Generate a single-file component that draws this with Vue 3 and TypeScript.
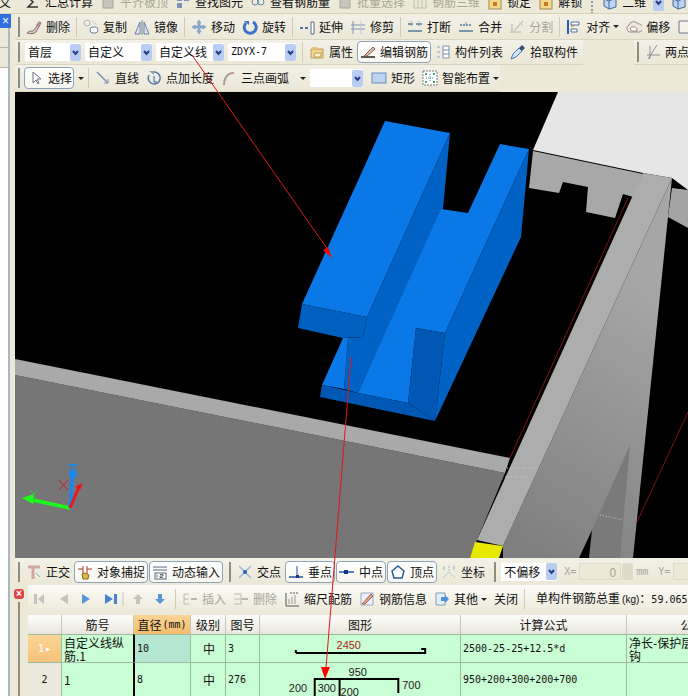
<script setup lang="ts">
interface Tool {
  label?: string;
  icon?: string;
  dim?: boolean;
  caret?: boolean;
  boxed?: boolean;
  sep?: boolean;
  grip?: boolean;
}

const icons: Record<string, string> = {
  pencil:
    '<path d="M1 14c3-3 5-1 7-3l6-8 1 1-5 9c-2 2-6 2-9 1z" fill="#d9c9c0" stroke="#8a6a70"/><path d="M10 6l3-4 2 2-3 4z" fill="#b08a98"/>',
  copy: '<circle cx="4" cy="4" r="3" fill="none" stroke="#a9b2bd"/><rect x="7" y="8" width="8" height="6" rx="3" fill="#fff" stroke="#6f7f92"/><path d="M9 2l5 4" stroke="#a9b2bd" stroke-dasharray="1 1"/>',
  mirror:
    '<path d="M1 15L6 3v12zM15 15L10 3v12z" fill="#dce6f3" stroke="#66809f"/><path d="M8 1v15" stroke="#66809f"/>',
  move: '<path d="M8 1l2 3H9v3h3V6l3 2-3 2V9H9v3h1l-2 3-2-3h1V9H4v1L1 8l3-2v1h3V4H6z" fill="#8ab0d8" stroke="#5f86b0" stroke-width=".5"/>',
  rotate:
    '<path d="M11 3a6 6 0 1 1-7 1" fill="none" stroke="#3f72c8" stroke-width="3"/><path d="M2 2h5v4z" fill="#3f72c8"/>',
  extend:
    '<path d="M1 9h3M6 9h3" stroke="#5070a8" stroke-width="2"/><path d="M12 3h3v12h-3z" fill="#fff" stroke="#5a6a80"/>',
  trim: '<path d="M3 2v13M1 6h14M1 10h14" stroke="#7c93b5"/><path d="M11 2v13" stroke="#b8c6d8"/>',
  breakline:
    '<path d="M1 5h5M9 5h6M1 12h14" stroke="#79a" stroke-width="2"/><path d="M4 2v6M12 2v6" stroke="#79a" stroke-dasharray="1 1"/>',
  merge:
    '<path d="M1 12h14" stroke="#79a" stroke-width="2"/><path d="M2 6h12" stroke="#79a" stroke-dasharray="2 1" stroke-width="2"/><path d="M8 3v3" stroke="#79a"/>',
  split:
    '<path d="M1 13h11M3 5v9M14 2L5 12" stroke="#c8c6b8" stroke-width="1.5"/><path d="M10 3l4 4" stroke="#c8c6b8"/>',
  align:
    '<path d="M2 1v14" stroke="#2a5db0" stroke-width="2"/><path d="M5 3h8v3H5zM5 10h6v3H5z" fill="#fff" stroke="#5070a0"/><path d="M5 7h3" stroke="#c07030"/>',
  offset:
    '<path d="M3 13a4 4 0 0 1 0-7 5 5 0 0 1 9-1 4 4 0 0 1 1 8z" fill="#f3e7e0" stroke="#9a8a8a"/><path d="M6 12a2 2 0 0 1 1-4 3 3 0 0 1 4 2v2z" fill="#fff" stroke="#9a8a8a"/>',
  square: '<path d="M2 2h12v12H2z" fill="#f5f3e8" stroke="#6a7a90"/>',
  prop: '<path d="M2 5h12v9H2z" fill="#f3d58e" stroke="#b89a60"/><path d="M3 3h5l1 2H3z" fill="#e9c26b"/><path d="M6 9h7l-2 4H5z" fill="#fff3cc" stroke="#c09a50"/>',
  rebar:
    '<path d="M1 13h14" stroke="#222" stroke-width="1.5"/><path d="M4 12L13 3l2 2-8 7z" fill="#d8c0b0" stroke="#86604a"/>',
  list: '<path d="M2 2h3v2H2zM2 7h3v2H2zM2 12h3v2H2z" fill="#bcc6d6"/><path d="M8 2h6v12H8z" fill="#fff" stroke="#7a8fa8"/><path d="M8 6h6M8 10h6" stroke="#7a8fa8"/>',
  picker:
    '<path d="M1 15l2-5 6-6 3 3-6 6z" fill="#cfe6f8" stroke="#4a78a8"/><path d="M9 4l3-3 3 3-3 3z" fill="#34506e"/>',
  cross: '<path d="M2 11h13M5 2v13M12 1L3 15" stroke="#8a8f96"/>',
  cursor: '<path d="M5 2v11l3-3 2 4 1-1-2-4h4z" fill="#fff" stroke="#6d7480"/>',
  line: '<path d="M2 2l11 11" stroke="#7d93ad" stroke-width="1.5"/><path d="M13 13v-4M13 13H9" stroke="#7d93ad"/>',
  addlen:
    '<path d="M8 2a6 6 0 1 1-5 3" fill="none" stroke="#5a78a8" stroke-width="1.5"/><path d="M3 1h5v4z" fill="#8aa"/><path d="M8 6v6M8 12h3" stroke="#36a"/>',
  arc: '<path d="M3 15C3 8 6 4 11 3" fill="none" stroke="#a2a09a" stroke-width="2"/><circle cx="12" cy="3" r="1" fill="#c87a60"/>',
  rect: '<rect x="1" y="3" width="14" height="10" fill="#bcd4f2" stroke="#6d8cb8"/>',
  smart:
    '<path d="M1 1h14v14H1z" fill="#fff" stroke="#777" stroke-dasharray="2 1"/><path d="M8 4v8M4 8h8" stroke="#48a" stroke-dasharray="1 1"/><path d="M3 3h2v2H3zM11 3h2v2h-2zM3 11h2v2H3zM11 11h2v2h-2z" fill="#4a7"/>',
  ortho:
    '<path d="M2 3h12M7 3v12" stroke="#d3a8a4" stroke-width="3"/><path d="M10 9l4 4" stroke="#8aa"/>',
  snap: '<path d="M1 5h5M6 2v8M10 2v8M10 5h5" stroke="#a63a20"/><path d="M5 10l3-1 4 2-1 4H6z" fill="#d9b84a" stroke="#8a7020"/>',
  dyn: '<path d="M1 3h14M1 6h14" stroke="#5a6a80"/><rect x="3" y="9" width="11" height="6" fill="#fff" stroke="#5a6a80"/><path d="M5 10.5v3M8 10.5h3v1.5H8v1.5h3" fill="none" stroke="#333" stroke-width=".7"/>',
  intersect:
    '<path d="M2 2l12 12M14 2L2 14" stroke="#9db8d8" stroke-width="1.5"/><circle cx="8" cy="8" r="2" fill="#2d5fa8"/>',
  perp: '<path d="M1 13h14" stroke="#2056a8" stroke-width="1.5"/><path d="M9 2v11" stroke="#2056a8"/><rect x="8" y="11" width="3" height="3" fill="#123a78"/>',
  mid: '<path d="M0 8h15" stroke="#2056a8" stroke-width="1.5"/><rect x="5" y="6" width="4" height="4" fill="#123a78"/>',
  vertex: '<path d="M8 2l6 5-2 7H4L2 7z" fill="#fff" stroke="#2a5a9a" stroke-width="1.5"/>',
  coord:
    '<path d="M2 14L8 8l6 6M8 2v6" fill="none" stroke="#a8b8cc" stroke-dasharray="2 1"/><path d="M3 2v4M13 2v4" stroke="#8ba"/>',
  insert:
    '<path d="M2 3h5M2 8h5M2 13h5M2 3v10" stroke="#b8b8ae"/><path d="M9 8h6" stroke="#b8b8ae" stroke-width="2"/>',
  remove:
    '<path d="M1 3h7M1 8h7M1 13h7M8 3v10" stroke="#b8b8ae"/><path d="M9 8h6" stroke="#b8b8ae" stroke-width="2"/>',
  scale:
    '<path d="M2 2v13h13" stroke="#555" fill="none"/><path d="M5 13V8M8 13V6M11 13V4" stroke="#999"/><path d="M6 2h8" stroke="#555" stroke-dasharray="2 1"/>',
  info: '<path d="M2 2h12v12H2z" fill="#eef" stroke="#9ab"/><path d="M3 13L12 3l2 2-8 8z" fill="#e0a088" stroke="#a86a50"/>',
  other:
    '<path d="M2 2h9v12H2z" fill="#e4eef8" stroke="#7f9cc0"/><path d="M7 6h4V4l4 4-4 4v-2H7z" fill="#4f8ed8"/>',
  sum: '<path d="M13 3H3l5 5-5 5h10" fill="none" stroke="#333" stroke-width="1.5"/>',
  grayDoc: '<path d="M3 2h10v12H3z" fill="#c8c6bc" stroke="#a8a69c"/>',
  find: '<path d="M2 2h5v5H2zM9 2h5v5H9zM2 9h5v5H2z" fill="#7a95b8"/>',
  view: '<circle cx="5" cy="8" r="3" fill="none" stroke="#68a"/><circle cx="11" cy="8" r="3" fill="none" stroke="#68a"/>',
  rebar3d: '<path d="M2 2h12v12H2zM6 2v12M10 2v12" fill="none" stroke="#c0beb2"/>',
  lock: '<rect x="2" y="5" width="12" height="10" fill="#f2d98e" stroke="#a48a4a"/><rect x="6" y="8" width="4" height="4" fill="#c57a20"/>',
  cube: '<path d="M2 5l7-3 5 2v9l-7 2-5-3z" fill="#bcd4f2" stroke="#43699c"/><path d="M2 5l5 2v8M7 7l7-3" fill="none" stroke="#43699c"/>',
};

const topBar: Tool[] = [
  { icon: "sum", label: "汇总计算" },
  { icon: "grayDoc", label: "平齐板顶", dim: true },
  { icon: "find", label: "查找图元" },
  { icon: "view", label: "查看钢筋量" },
  { icon: "grayDoc", label: "批量选择", dim: true },
  { icon: "rebar3d", label: "钢筋三维", dim: true },
  { icon: "lock", label: "锁定" },
  { icon: "lock", label: "解锁" },
  { grip: true },
  { icon: "cube", label: "二维" },
];

const row1: Tool[] = [
  { icon: "pencil", label: "删除" },
  { sep: true },
  { icon: "copy", label: "复制" },
  { icon: "mirror", label: "镜像" },
  { sep: true },
  { icon: "move", label: "移动" },
  { icon: "rotate", label: "旋转" },
  { sep: true },
  { icon: "extend", label: "延伸" },
  { icon: "trim", label: "修剪" },
  { sep: true },
  { icon: "breakline", label: "打断" },
  { icon: "merge", label: "合并" },
  { icon: "split", label: "分割", dim: true },
  { sep: true },
  { icon: "align", label: "对齐", caret: true },
  { icon: "offset", label: "偏移" },
  { icon: "square", label: "" },
];

const row2Combos = [
  { text: "首层", width: 56 },
  { text: "自定义", width: 67 },
  { text: "自定义线", width: 68 },
  { text: "ZDYX-7", width: 68, mono: true },
];

const row2: Tool[] = [
  { icon: "prop", label: "属性" },
  { icon: "rebar", label: "编辑钢筋", boxed: true },
  { icon: "list", label: "构件列表" },
  { icon: "picker", label: "拾取构件" },
];

const row3a: Tool[] = [
  { icon: "line", label: "直线" },
  { icon: "addlen", label: "点加长度" },
  { icon: "arc", label: "三点画弧", caret: true },
];

const row3b: Tool[] = [
  { icon: "rect", label: "矩形" },
  { icon: "smart", label: "智能布置", caret: true },
];

const snapA: Tool[] = [
  { icon: "ortho", label: "正交" },
  { icon: "snap", label: "对象捕捉", boxed: true },
  { icon: "dyn", label: "动态输入", boxed: true },
  { grip: true },
  { icon: "intersect", label: "交点" },
  { icon: "perp", label: "垂点", boxed: true },
  { icon: "mid", label: "中点", boxed: true },
  { icon: "vertex", label: "顶点", boxed: true },
  { icon: "coord", label: "坐标" },
  { grip: true },
];

const rows = [
  {
    no: "1",
    name: ["自定义线纵", "筋.1"],
    dia: "10",
    fig: "3",
    formula: "2500-25-25+12.5*d",
    desc: ["净长-保护层+弯", "钩"],
    active: true,
  },
  {
    no: "2",
    name: ["1"],
    dia: "8",
    fig: "276",
    formula: "950+200+300+200+700",
    desc: [],
    active: false,
  },
];
</script>

<template>
  <div class="app">
    <div class="menu">
      <span class="menu-cut">定义</span>
      <div v-for="(t, i) in topBar" :key="i" class="menu-item" :class="{ dim: t.dim, grip: t.grip }">
        <svg v-if="t.icon" class="ico" viewBox="0 0 16 16" v-html="icons[t.icon]"></svg>
        <span v-if="t.label">{{ t.label }}</span>
      </div>
      <svg class="combo-btn menu-btn" viewBox="0 0 11 17">
        <rect width="11" height="17" rx="2" fill="#b9cdf2" />
        <path d="M3 7l2.5 3L8 7" fill="none" stroke="#24408c" stroke-width="2" />
      </svg>
      <svg class="ico menu-btn" viewBox="0 0 16 16" v-html="icons.cube"></svg>
    </div>

    <div class="body">
      <div class="rail">
        <div class="rail-x">×</div>
        <div class="rail-tab"></div>
        <div class="rail-tab"></div>
        <div class="rail-fill"></div>
      </div>

      <div class="main">
        <div class="row row1">
          <div class="bar">
            <i class="gripper"></i>
            <template v-for="(t, i) in row1" :key="i">
              <i v-if="t.sep" class="sep"></i>
              <div v-else class="tool" :class="{ dim: t.dim }">
                <svg class="ico" viewBox="0 0 16 16" v-html="icons[t.icon!]"></svg>
                <span v-if="t.label">{{ t.label }}</span>
                <b v-if="t.caret" class="caret"></b>
              </div>
            </template>
          </div>
        </div>

        <div class="row row2">
          <div class="bar bar-combos">
            <i class="gripper grip-wide"></i>
            <div
              v-for="c in row2Combos"
              :key="c.text"
              class="combo"
              :style="{ width: c.width + 'px' }"
            >
              <span :class="{ mono: c.mono }">{{ c.text }}</span>
              <svg class="combo-btn" viewBox="0 0 11 17">
                <rect width="11" height="17" rx="2" fill="#b9cdf2" />
                <path d="M3 7l2.5 3L8 7" fill="none" stroke="#24408c" stroke-width="2" />
              </svg>
            </div>
            <i class="sep sep-wide"></i>
            <div v-for="t in row2" :key="t.label" class="tool" :class="{ boxed: t.boxed }">
              <svg class="ico" viewBox="0 0 16 16" v-html="icons[t.icon!]"></svg>
              <span>{{ t.label }}</span>
            </div>
          </div>
          <div class="bar bar-right">
            <i class="gripper"></i>
            <div class="tool">
              <svg class="ico" viewBox="0 0 16 16" v-html="icons.cross"></svg>
              <span>两点</span>
            </div>
          </div>
        </div>

        <div class="row row3">
          <div class="bar bar-draw">
            <i class="gripper grip-mid"></i>
            <div class="tool boxed select-btn">
              <svg class="ico" viewBox="0 0 16 16" v-html="icons.cursor"></svg>
              <span>选择</span>
            </div>
            <b class="caret caret-select"></b>
            <i class="sep"></i>
            <div v-for="t in row3a" :key="t.label" class="tool">
              <svg class="ico" viewBox="0 0 16 16" v-html="icons[t.icon!]"></svg>
              <span>{{ t.label }}</span>
              <b v-if="t.caret" class="caret caret-far"></b>
            </div>
            <div class="combo combo-blank">
              <span></span>
              <svg class="combo-btn" viewBox="0 0 11 17">
                <rect width="11" height="17" rx="2" fill="#b9cdf2" />
                <path d="M3 7l2.5 3L8 7" fill="none" stroke="#24408c" stroke-width="2" />
              </svg>
            </div>
            <div v-for="t in row3b" :key="t.label" class="tool">
              <svg class="ico" viewBox="0 0 16 16" v-html="icons[t.icon!]"></svg>
              <span>{{ t.label }}</span>
              <b v-if="t.caret" class="caret"></b>
            </div>
          </div>
        </div>

        <svg class="scene" viewBox="15 92 673 466" width="673" height="466">
          <defs>
            <linearGradient id="wall" gradientUnits="userSpaceOnUse" x1="520" y1="540" x2="670" y2="300">
              <stop offset="0" stop-color="#808080" />
              <stop offset="1" stop-color="#a6a6a6" />
            </linearGradient>
          </defs>
          <rect x="15" y="92" width="673" height="466" fill="#000" />
          <!-- floor and back walls -->
          <path d="M15 375L505 473 477 540 470 558H15z" fill="#767676" />
          <path d="M15 359L510 458 505 473 15 375z" fill="#a9a9a9" />
          <path d="M558 92H688V190L672 178 643 173 533 150z" fill="#e6e6e6" />
          <path d="M533 151L643 174 633 197 623 194 615 218 586 212 588 187 563 182 559 193 529 188z" fill="#a8a8a8" />
          <path d="M672 188L688 190V228L668 217z" fill="#a4a4a4" />
          <path d="M672 178L633 558H503V546z" fill="url(#wall)" />
          <path d="M630 445L592 530 589 558H620z" fill="#7a7a7a" />
          <path d="M592 530L579 558H589z" fill="#000" />
          <path d="M643 173L672 178 503 546 477 540z" fill="#adadad" />
          <path d="M475 542L503 546 499 558H470z" fill="#e8e800" />
          <path d="M510 458L628 198" stroke="#7a1414" fill="none" />
          <path d="M637 522L688 412" stroke="#7a1414" fill="none" />
          <path d="M507 468H537M505 477H528M600 515L623 520" stroke="#ccc" stroke-dasharray="1 2" fill="none" />
          <!-- blue member -->
          <path d="M385 121L450 133 367 317 302 304z" fill="#0a78e6" />
          <path d="M450 133L443 209 358 393 344 389 348 338 363 337 367 317z" fill="#0062c4" />
          <path d="M302 304L367 317 363 337 343 338 298 328z" fill="#0060c0" />
          <path d="M343 338L348 338 344 389 322 385z" fill="#0a78e6" />
          <path d="M441 209L468 213 500 144 529 149 445 333 416 328 408 403 358 393z" fill="#0a78e6" />
          <path d="M529 149L521 237 435 421 445 333z" fill="#0062c4" />
          <path d="M416 328L445 333 435 421 408 403z" fill="#0058b4" />
          <path d="M322 385L358 393 408 403 435 421 320 397z" fill="#0058b4" />
          <!-- axis marker -->
          <path d="M70 508L28 499" stroke="#19ff19" stroke-width="3.5" />
          <path d="M22 498L34 494 33 504z" fill="#19ff19" />
          <path d="M70 508L73 468" stroke="#1a86f0" stroke-width="3.5" />
          <circle cx="73" cy="474" r="4" fill="#1a86f0" />
          <path d="M69 465H77" stroke="#1a86f0" stroke-width="2" />
          <path d="M70 508L79 487" stroke="#f01414" stroke-width="3" />
          <path d="M82 483L75 487 81 489z" fill="#f01414" />
          <path d="M59 480L68 490M68 480L59 490" stroke="#c02030" fill="none" />
          <path d="M30 490L34 494 38 490M34 494V500" stroke="#39c739" fill="none" />
        </svg>

        <div class="row snapbar">
          <i class="gripper"></i>
          <template v-for="(t, i) in snapA" :key="i">
            <i v-if="t.grip" class="gripper gripper-mid"></i>
            <div v-else class="tool" :class="{ boxed: t.boxed }">
              <svg class="ico" viewBox="0 0 16 16" v-html="icons[t.icon!]"></svg>
              <span>{{ t.label }}</span>
            </div>
          </template>
          <div class="combo combo-offset">
            <span>不偏移</span>
            <svg class="combo-btn" viewBox="0 0 11 17">
              <rect width="11" height="17" rx="2" fill="#b9cdf2" />
              <path d="M3 7l2.5 3L8 7" fill="none" stroke="#24408c" stroke-width="2" />
            </svg>
          </div>
          <span class="coord-label">X=</span>
          <div class="coord-input"><span>0</span></div>
          <div class="spinner"></div>
          <span class="coord-label mm">mm</span>
          <span class="coord-label">Y=</span>
          <div class="coord-input"></div>
        </div>
      </div>
    </div>

    <div class="panel">
      <div class="panel-side">
        <b class="close-dot">×</b>
        <i class="panel-dots"></i>
      </div>
      <div class="panel-body">
        <div class="panel-tools">
          <svg class="nav" viewBox="0 0 134 14" width="134" height="14">
            <path d="M0 2h3v10H0zM10 2v10L4 7z" fill="#c4c4bc" />
            <path d="M34 2v10l-8-5z" fill="#c4c4bc" />
            <path d="M48 2v10l8-5z" fill="#5a94dc" />
            <path d="M71 2v10l8-5zM80 2h3v10h-3z" fill="#4a84d0" />
            <path d="M89 0v14" stroke="#c9c7b8" />
            <path d="M104 2l5 5h-3v5h-4V7h-3z" fill="#c4c4bc" />
            <path d="M126 12l5-5h-3V2h-4v5h-3z" fill="#5a94dc" />
          </svg>
          <i class="sep"></i>
          <div class="tool dim">
            <svg class="ico" viewBox="0 0 16 16" v-html="icons.insert"></svg>
            <span>插入</span>
          </div>
          <div class="tool dim">
            <svg class="ico" viewBox="0 0 16 16" v-html="icons.remove"></svg>
            <span>删除</span>
          </div>
          <div class="tool">
            <svg class="ico" viewBox="0 0 16 16" v-html="icons.scale"></svg>
            <span>缩尺配筋</span>
          </div>
          <div class="tool">
            <svg class="ico" viewBox="0 0 16 16" v-html="icons.info"></svg>
            <span>钢筋信息</span>
          </div>
          <div class="tool">
            <svg class="ico" viewBox="0 0 16 16" v-html="icons.other"></svg>
            <span>其他</span>
            <b class="caret"></b>
          </div>
          <div class="tool"><span>关闭</span></div>
          <i class="sep"></i>
          <span class="total">单构件钢筋总重<small>(kg)</small>：<em>59.065</em></span>
        </div>

        <div class="table">
          <div class="th"></div>
          <div class="th">筋号</div>
          <div class="th th-on">直径<small>(mm)</small></div>
          <div class="th">级别</div>
          <div class="th">图号</div>
          <div class="th">图形</div>
          <div class="th">计算公式</div>
          <div class="th">公式描述</div>

          <template v-for="r in rows" :key="r.no">
            <div class="td td-no" :class="{ 'td-no-on': r.active }">
              {{ r.no }}<span v-if="r.active" class="mark">▸</span>
            </div>
            <div class="td td-name">
              <div v-for="n in r.name" :key="n">{{ n }}</div>
            </div>
            <div class="td td-dia" :class="{ 'td-dia-on': r.active }">{{ r.dia }}</div>
            <div class="td td-grade">中</div>
            <div class="td td-num">{{ r.fig }}</div>
            <div class="td td-shape">
              <svg v-if="r.active" viewBox="0 0 201 28" width="201" height="28">
                <text x="77" y="14" class="dim-red">2450</text>
                <path d="M36 18v-3M36 18H166V14H162" fill="none" stroke="#000" stroke-width="2" />
              </svg>
              <svg v-else viewBox="0 0 201 34" width="201" height="34">
                <text x="89" y="13" class="dim-black">950</text>
                <text x="29" y="29" class="dim-black">200</text>
                <text x="58" y="29" class="dim-black">300</text>
                <text x="81" y="33" class="dim-black">200</text>
                <text x="143" y="26" class="dim-black">700</text>
                <path d="M55 34V16H139V30" fill="none" stroke="#000" stroke-width="2" />
                <path d="M80 16V34H76M80 34V27" fill="none" stroke="#000" stroke-width="2" />
              </svg>
            </div>
            <div class="td td-num">{{ r.formula }}</div>
            <div class="td td-desc">
              <div v-for="d in r.desc" :key="d">{{ d }}</div>
            </div>
          </template>
        </div>
      </div>
    </div>

    <svg class="arrows" viewBox="0 0 688 696" width="688" height="696">
      <path d="M192 55L328 250" stroke="#e01818" fill="none" />
      <path d="M332 258L323 250 328 247z" fill="#f00" />
      <path d="M351 357L326 668" stroke="#e01818" fill="none" />
      <path d="M325 679L321 667H330z" fill="#f00" />
    </svg>
  </div>
</template>

<style>
html,
body {
  margin: 0;
  background: #ece9d8;
}
</style>

<style scoped>
.app {
  position: relative;
  width: 688px;
  height: 696px;
  overflow: hidden;
  display: flex;
  flex-direction: column;
  background: #ece9d8;
  font-family: "Noto Sans CJK SC", "Liberation Sans", sans-serif;
  font-size: 12px;
  line-height: 16px;
  color: #111;
}

.menu {
  height: 13px;
  flex: none;
  display: flex;
  gap: 7px;
  overflow: hidden;
  white-space: nowrap;
  align-items: flex-start;
  border-bottom: 1px solid #d6d2bd;
}
.menu-cut {
  margin: -5px 7px 0 -13px;
}
.menu-item {
  display: flex;
  align-items: center;
  gap: 4px;
  margin-top: -6px;
}
.menu-item.grip {
  width: 2px;
  height: 20px;
  border-left: 2px dotted #999;
  margin-left: 2px;
}
.menu-btn {
  margin-top: -6px;
  flex: none;
}

.body {
  flex: none;
  height: 571px;
  display: flex;
}
.rail {
  flex: none;
  width: 8px;
  display: flex;
  flex-direction: column;
  border-right: 2px solid #aeb6c4;
  background: #fff;
}
.rail-x {
  height: 14px;
  width: 11px;
  background: #2f6fe0;
  color: #fff;
  font: 12px/14px "Liberation Sans", sans-serif;
  text-align: center;
  position: relative;
}
.rail-tab {
  height: 19px;
  background: #ece9d8;
  border-bottom: 1px solid #b8b6a6;
}
.rail-fill {
  flex: 1;
}
.main {
  flex: none;
  width: 678px;
  padding-left: 5px;
  box-sizing: border-box;
  display: flex;
  flex-direction: column;
}

.row {
  display: flex;
  flex: none;
  justify-content: space-between;
}
.row1 {
  height: 26px;
}
.row2 {
  height: 25px;
}
.row3 {
  height: 27px;
}
.bar {
  display: flex;
  align-items: center;
  gap: 1px;
  padding: 0 5px 0 3px;
  background: linear-gradient(#f3f1e6, #ebe8d8);
  border-bottom: 1px solid #d8d4c0;
  box-sizing: border-box;
}
.row1 .bar {
  width: 100%;
}
.bar-combos {
  width: 568px;
}
.bar-right {
  width: 54px;
}
.bar-draw {
  width: 485px;
}

.gripper {
  flex: none;
  width: 2px;
  height: 20px;
  margin-right: 2px;
  background-image: radial-gradient(#8f8d80 1px, transparent 1px);
  background-size: 2px 3px;
}
.grip-wide {
  margin-right: 4px;
}
.grip-mid {
  margin-right: 3px;
}
.gripper-mid {
  margin: 0 2px 0 5px;
}
.sep {
  flex: none;
  width: 1px;
  height: 20px;
  margin: 0 2px;
  background: #cfccb8;
}
.sep-wide {
  margin: 0 2px;
}

.tool {
  flex: none;
  display: flex;
  align-items: center;
  gap: 4px;
  height: 22px;
  padding: 0 3px;
  box-sizing: border-box;
  white-space: nowrap;
}
.dim,
.dim span {
  color: #a8a698;
}
.boxed {
  padding: 0 2px;
  border: 1px solid #8ea2b8;
  border-radius: 4px;
  background: linear-gradient(#fff, #f7f6ef);
}
.ico {
  flex: none;
  width: 16px;
  height: 16px;
}
.caret {
  flex: none;
  width: 0;
  height: 0;
  margin-left: -1px;
  border: 3px solid transparent;
  border-top: 3px solid #222;
  border-bottom: 0;
}
.caret-far {
  margin-left: 7px;
}

.combo {
  flex: none;
  height: 18px;
  display: flex;
  align-items: center;
  justify-content: space-between;
  background: #fff;
  padding-left: 3px;
  margin-right: 3px;
  box-sizing: border-box;
  overflow: hidden;
}
.combo-btn {
  flex: none;
  width: 11px;
  height: 17px;
}
.mono {
  font: 10px/16px "DejaVu Sans Mono", monospace;
}
.combo-blank {
  width: 53px;
  margin: 0 4px 0 0;
}
.combo-offset {
  width: 56px;
  margin: 0 4px 0 2px;
}
.select-btn {
  width: 50px;
  padding: 0 3px;
}
.caret-select {
  margin: 0 1px 0 3px;
}

.scene {
  display: block;
  flex: none;
}

.snapbar {
  height: 27px;
  justify-content: flex-start;
  align-items: center;
  padding-left: 3px;
  gap: 1px;
  background: linear-gradient(#f3f1e6, #ebe8d8);
}
.coord-label {
  flex: none;
  font: 10px/16px "DejaVu Sans Mono", monospace;
  color: #a8a698;
  margin: 0 2px;
}
.mm {
  margin-right: 7px;
}
.coord-input {
  flex: none;
  width: 42px;
  height: 17px;
  background: #ece9d8;
  border: 1px solid #dedbc8;
  box-sizing: border-box;
  text-align: right;
  color: #a8a698;
  padding-right: 4px;
  font-size: 12px;
}
.spinner {
  flex: none;
  width: 11px;
  height: 17px;
  background: #dedbc8;
  border-radius: 2px;
}

.panel {
  flex: 1;
  display: flex;
  border-left: 8px solid #fff;
  min-height: 0;
}
.panel-side {
  flex: none;
  width: 20px;
  box-sizing: border-box;
  border-left: 2px solid #aeb6c4;
  display: flex;
  flex-direction: column;
  align-items: center;
}
.close-dot {
  width: 10px;
  height: 10px;
  margin: 4px 0 3px;
  border-radius: 3px;
  background: #d84848;
  color: #fff;
  font: bold 10px/10px "Liberation Sans", sans-serif;
  text-align: center;
}
.panel-dots {
  flex: 1;
  width: 2px;
  background-image: radial-gradient(#8f8d80 1px, transparent 1px);
  background-size: 2px 3px;
}
.panel-body {
  flex: 1;
  min-width: 0;
  overflow: hidden;
}
.panel-tools {
  height: 28px;
  display: flex;
  align-items: center;
  gap: 1px;
  padding-left: 6px;
  background: linear-gradient(#fbfbf7, #ece9d8);
  margin-bottom: 2px;
  white-space: nowrap;
}
.nav {
  flex: none;
  margin-right: 4px;
}
.total {
  flex: none;
  margin-left: 8px;
}
.total small {
  font: 10px/16px "Liberation Sans", sans-serif;
  margin-left: 2px;
}
.total em {
  font: normal 10px/16px "DejaVu Sans Mono", monospace;
}

.table {
  display: grid;
  grid-template-columns: 34px 72px 57px 35px 34px 201px 166px 156px;
  grid-template-rows: 19px 28px 34px;
}
.th {
  display: flex;
  align-items: center;
  justify-content: center;
  background: linear-gradient(#fdfdfb, #e8e6dc);
  border-right: 1px solid #c8c6b8;
  box-sizing: border-box;
  white-space: nowrap;
}
.th small {
  font: 10px/16px "DejaVu Sans Mono", monospace;
  margin-left: 1px;
}
.th-on {
  background: linear-gradient(#f9d596, #f3bc6c);
}
.td {
  display: flex;
  align-items: center;
  background: #c9fdd3;
  border-right: 1px solid #9dbb9f;
  border-top: 1px solid #9dbb9f;
  box-sizing: border-box;
  padding-left: 2px;
  overflow: hidden;
  white-space: nowrap;
}
.td-no {
  background: #ebe9dc;
  justify-content: center;
  font: 10px/16px "DejaVu Sans Mono", monospace;
  padding: 0;
}
.td-no-on {
  background: linear-gradient(#fcd596, #f6c27a);
  color: #fff;
}
.mark {
  margin-left: 1px;
}
.td-name {
  display: block;
  align-content: center;
  line-height: 13px;
}
.td-dia {
  border-left: 2px solid #000;
  margin-left: -1px;
  font: 10px/16px "DejaVu Sans Mono", monospace;
}
.td-dia-on {
  background: #b4e6d2;
}
.td-grade {
  justify-content: center;
}
.td-num {
  font: 10px/16px "DejaVu Sans Mono", monospace;
}
.td-shape {
  padding: 0;
  align-items: flex-start;
}
.td-shape svg {
  display: block;
}
.td-desc {
  display: block;
  align-content: center;
  line-height: 13px;
}
.dim-red {
  font: 11px "Liberation Sans", sans-serif;
  fill: #b02020;
}
.dim-black {
  font: 11px "Liberation Sans", sans-serif;
  fill: #222;
}

.arrows {
  position: absolute;
  left: 0;
  top: 0;
  pointer-events: none;
}
</style>
